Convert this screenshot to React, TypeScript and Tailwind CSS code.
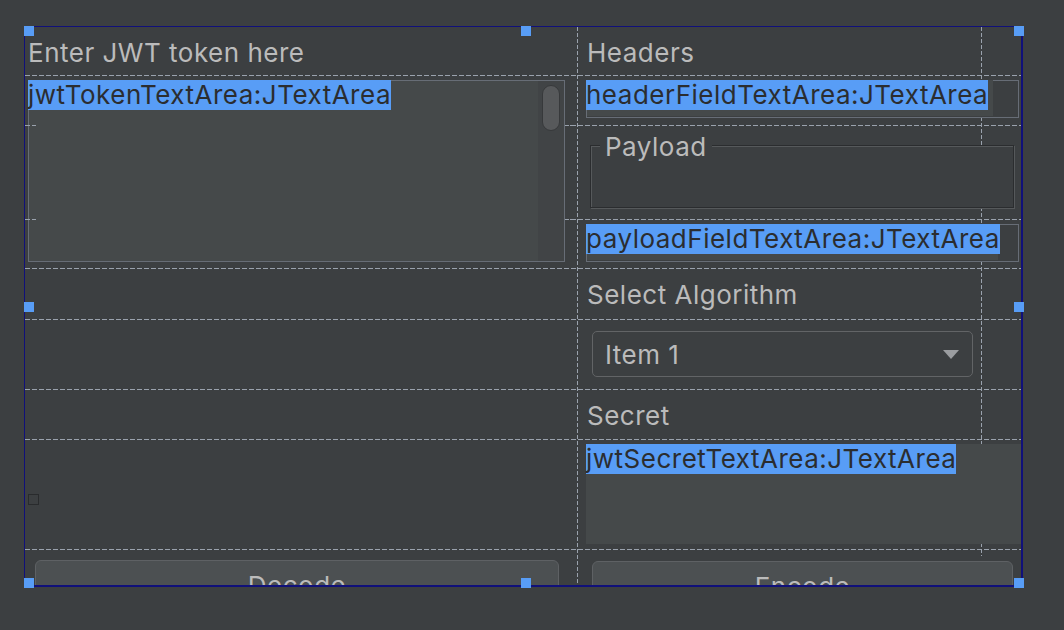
import React from 'react';

const GUIDE = '#9aa2ad';
const ROWS = [48, 98, 192, 241, 292, 362, 412, 522];

function Highlight({ text }: { text: string }) {
  return (
    <span className="relative z-10 -ml-px -mt-px block w-fit bg-[#589df6] leading-[30px] text-[#2b2d30]">
      {text}
    </span>
  );
}

function Label({ text, className = '' }: { text: string; className?: string }) {
  return <div className={`flex items-center text-[#bbbbbb] ${className}`}>{text}</div>;
}

function Handle({ className }: { className: string }) {
  return <div className={`absolute h-[10px] w-[10px] bg-[#589df6] ${className}`} />;
}

export default function App() {
  return (
    <div className="h-[630px] w-[1064px] overflow-hidden bg-[#3c3f41] pl-[24px] pt-[26px] font-['Inter',sans-serif] text-[26px] tracking-[0.5px]">
      <div className="relative w-[999px]">
        <div className="relative h-[561px] overflow-hidden border-b-2 border-l border-r-2 border-t border-[#10107a]">
          {/* designer grid guides */}
          <svg className="pointer-events-none absolute left-0 top-0" width="996" height="558">
            {ROWS.map(y => (
              <line key={y} x1="0" x2="996" y1={y + 0.5} y2={y + 0.5} stroke={GUIDE} strokeDasharray="5 2" />
            ))}
            <line x1="552.5" x2="552.5" y1="0" y2="558" stroke={GUIDE} strokeDasharray="4 2" />
            <line x1="956.5" x2="956.5" y1="0" y2="529" stroke={GUIDE} strokeDasharray="4 2" />
          </svg>

          <div className="relative grid grid-cols-[552px_404px_40px] grid-rows-[48px_50px_94px_49px_51px_70px_50px_110px_36px]">
            {/* left column */}
            <Label text="Enter JWT token here" className="col-start-1 row-start-1 pl-[3px] pt-[2px]" />

            <div className="col-start-1 row-span-3 row-start-2 ml-[3px] mt-[5px] flex h-[182px] w-[537px] border border-[#676d76] bg-[#45494a]">
              <div className="flex-1">
                <Highlight text="jwtTokenTextArea:JTextArea" />
              </div>
              <div className="flex w-[26px] justify-center bg-[#414446] pt-[4px]">
                <div className="h-[46px] w-[18px] rounded-full border border-[#37393b] bg-[#57595b]" />
              </div>
            </div>

            <div className="col-start-1 row-start-8 ml-[3px] mt-[55px] h-[11px] w-[11px] border border-[#292b2d]" />

            <div className="col-start-1 row-start-9 ml-[10px] mt-[11px] flex h-[50px] w-[524px] items-center justify-center rounded-[6px] border border-[#5e6164] bg-[#4c5052] text-[#bbbbbb]">
              Decode
            </div>

            {/* right column */}
            <Label text="Headers" className="col-start-2 row-start-1 pl-[10px] pt-[2px]" />

            <div className="col-span-2 col-start-2 row-start-2 ml-[9px] mt-[5px] h-[38px] w-[433px] border border-[#676d76] bg-[#3c3f41]">
              <div className="h-full w-[406px] bg-[#45494a]">
                <Highlight text="headerFieldTextArea:JTextArea" />
              </div>
            </div>

            <fieldset className="col-span-2 col-start-2 row-start-3 ml-[13px] mt-[5px] h-[78px] w-[424px] border border-[#2b2d2f] bg-[#3c3f41] shadow-[inset_1px_1px_0_#56595b,1px_1px_0_#56595b]">
              <legend className="ml-[9px] bg-[#3c3f41] px-[5px] pt-[4px] leading-[26px] text-[#bbbbbb]">Payload</legend>
            </fieldset>

            <div className="col-span-2 col-start-2 row-start-4 ml-[9px] mt-[5px] h-[38px] w-[433px] border border-[#676d76] bg-[#3c3f41]">
              <div className="h-full w-[411px] bg-[#45494a]">
                <Highlight text="payloadFieldTextArea:JTextArea" />
              </div>
            </div>

            <Label text="Select Algorithm" className="col-start-2 row-start-5 pl-[10px] pt-[2px]" />

            <div className="col-start-2 row-start-6 ml-[15px] mt-[12px] flex h-[46px] w-[381px] items-center justify-between rounded-[5px] border border-[#626466] bg-[#3c3f41] pl-[12px] pr-[13px] text-[#bbbbbb]">
              <span>Item 1</span>
              <svg width="16" height="9" viewBox="0 0 16 9">
                <path d="M0 0h16L8 9z" fill="#9b9da0" />
              </svg>
            </div>

            <Label text="Secret" className="col-start-2 row-start-7 pl-[10px] pt-[2px]" />

            <div className="col-span-2 col-start-2 row-start-8 ml-[9px] mt-[5px] h-[100px] w-[435px] bg-[#45494a]">
              <span className="block w-fit bg-[#589df6] leading-[30px] text-[#2b2d30]">jwtSecretTextArea:JTextArea</span>
            </div>

            <div className="col-span-2 col-start-2 row-start-9 ml-[15px] mt-[12px] flex h-[50px] w-[421px] items-center justify-center rounded-[6px] border border-[#5e6164] bg-[#4c5052] text-[#bbbbbb]">
              Encode
            </div>
          </div>

          {/* guide ticks drawn over components */}
          <svg className="pointer-events-none absolute left-0 top-0" width="996" height="558">
            {[98, 192].map(y => (
              <g key={y}>
                <line x1="0" x2="11" y1={y + 0.5} y2={y + 0.5} stroke={GUIDE} strokeDasharray="5 2" />
                <line x1="545" x2="552" y1={y + 0.5} y2={y + 0.5} stroke={GUIDE} strokeDasharray="5 2" />
              </g>
            ))}
          </svg>
        </div>

        <Handle className="left-0 top-0" />
        <Handle className="left-[497px] top-0" />
        <Handle className="left-[990px] top-0" />
        <Handle className="left-0 top-[276px]" />
        <Handle className="left-[990px] top-[276px]" />
        <Handle className="left-0 top-[552px]" />
        <Handle className="left-[497px] top-[552px]" />
        <Handle className="left-[990px] top-[552px]" />
      </div>
    </div>
  );
}
